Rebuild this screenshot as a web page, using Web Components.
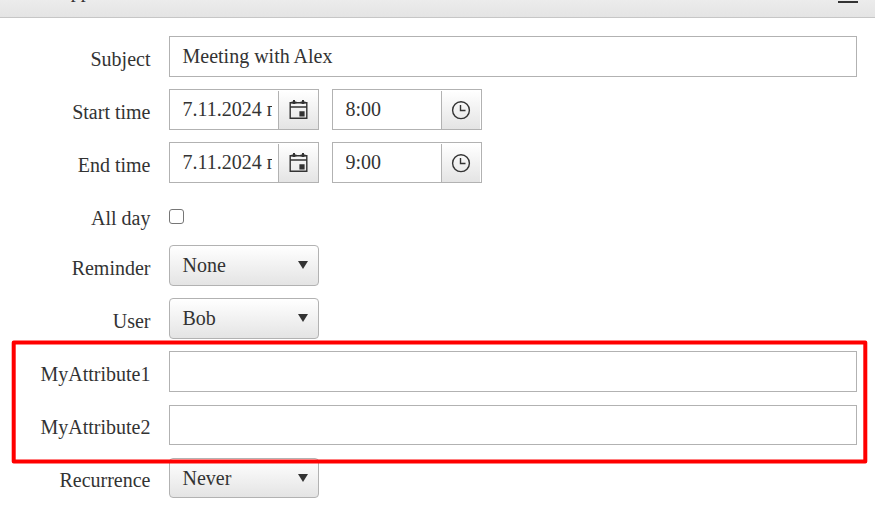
<!DOCTYPE html>
<html lang="en">
<head>
<meta charset="utf-8">
<title>Scheduler</title>
<style>
    html, body { margin: 0; height: 508px; overflow: hidden; background: #fff; }
    body { font: 20px/24px "Liberation Serif", serif; color: #333; position: relative; }
</style>
</head>
<body>
<edit-dialog caption="Edit Appointment">
    <form-row label="Subject"><text-field value="Meeting with Alex"></text-field></form-row>
    <form-row label="Start time">
        <picker-field value="7.11.2024 г." icon="calendar"></picker-field>
        <picker-field value="8:00" icon="clock"></picker-field>
    </form-row>
    <form-row label="End time">
        <picker-field value="7.11.2024 г." icon="calendar"></picker-field>
        <picker-field value="9:00" icon="clock"></picker-field>
    </form-row>
    <form-row label="All day" style="--row: 50px"><check-box></check-box></form-row>
    <form-row label="Reminder"><drop-down>None</drop-down></form-row>
    <form-row label="User"><drop-down>Bob</drop-down></form-row>
    <form-row label="MyAttribute1" style="--row: 54px"><text-field></text-field></form-row>
    <form-row label="MyAttribute2" style="--height: 40px; --label-top: 10px"><text-field></text-field></form-row>
    <form-row label="Recurrence" style="--height: 40px; --label-top: 10px"><drop-down>Never</drop-down></form-row>
</edit-dialog>
<highlight-frame></highlight-frame>

<script>
const border = '#b2b2b2';
const shade = 'linear-gradient(#fff, #e4e4e4)';

const icons = {
    calendar: `
        <svg width="19" height="20" viewBox="0 0 19 20">
            <path d="M1.2 2.7h16.6v15.6H1.2zM1 7h17" fill="none" stroke="#333" stroke-width="1.4"/>
            <path d="M4 0h2v4H4zM13 0h2v4h-2zM2.6 1.4h4.8v2H2.6zM11.6 1.4h4.8v2h-4.8zM10.4 11.2h5.2v5.2h-5.2z" fill="#333"/>
        </svg>`,
    clock: `
        <svg width="20" height="20" viewBox="0 0 20 20">
            <circle cx="10" cy="10.2" r="8.4" fill="none" stroke="#333" stroke-width="1.4"/>
            <path d="M9.5 5v5.5h5" fill="none" stroke="#333" stroke-width="1.4"/>
        </svg>`
};

class EditDialog extends HTMLElement {
    constructor(){
        super();
        this.attachShadow({mode: 'open'});
    }

    connectedCallback(){
        this.shadowRoot.innerHTML = `
        <style>
            :host { display: block; }
            header {
                box-sizing: border-box;
                height: 18px;
                padding: 0 17px 0 19px;
                display: flex;
                justify-content: space-between;
                align-items: flex-end;
                overflow: hidden;
                border-bottom: 1px solid #c6c6c6;
                background: linear-gradient(#ececec, #e4e4e4);
            }
            .caption { height: 24px; margin-bottom: 15px; }
            .bar { width: 20px; height: 2px; margin-bottom: 14px; background: #333; }
            main { padding: 18px 18px 0 0; }
        </style>
        <header>
            <span class="caption">${this.getAttribute('caption')}</span>
            <span class="bar"></span>
        </header>
        <main><slot></slot></main>
        `;
    }
}

class FormRow extends HTMLElement {
    constructor(){
        super();
        this.attachShadow({mode: 'open'});
    }

    connectedCallback(){
        this.shadowRoot.innerHTML = `
        <style>
            :host {
                display: flex;
                height: var(--row, 53px);
                gap: 18.5px;
            }
            label {
                width: 150.5px;
                box-sizing: border-box;
                padding-top: var(--label-top, 11px);
                text-align: right;
                flex: none;
            }
            .field { display: flex; flex: 1; gap: 13px; height: var(--height, 41px); }
        </style>
        <label>${this.getAttribute('label')}</label>
        <div class="field"><slot></slot></div>
        `;
    }
}

class TextField extends HTMLElement {
    constructor(){
        super();
        this.attachShadow({mode: 'open'});
    }

    connectedCallback(){
        this.shadowRoot.innerHTML = `
        <style>
            :host {
                display: block;
                flex: 1;
                box-sizing: border-box;
                padding: 7px 12.5px;
                border: 1px solid ${border};
                background: #fff;
            }
        </style>
        <span>${this.getAttribute('value') || ''}</span>
        `;
    }
}

class PickerField extends HTMLElement {
    constructor(){
        super();
        this.attachShadow({mode: 'open'});
    }

    connectedCallback(){
        const icon = this.getAttribute('icon');
        this.shadowRoot.innerHTML = `
        <style>
            :host {
                display: flex;
                width: 150px;
                box-sizing: border-box;
                border: 1px solid ${border};
                background: #fff;
            }
            .value {
                flex: 1;
                min-width: 0;
                margin: 7px 6px 0 12.5px;
                overflow: hidden;
                white-space: nowrap;
            }
            .button {
                width: 39px;
                margin-top: 1px;
                display: flex;
                justify-content: center;
                align-items: center;
                border-left: 1px solid ${border};
                background: ${shade};
            }
            .clock { width: 38px; margin-right: 1px; }
            svg { display: block; }
        </style>
        <span class="value">${this.getAttribute('value')}</span>
        <span class="button ${icon}">${icons[icon]}</span>
        `;
    }
}

class CheckBox extends HTMLElement {
    constructor(){
        super();
        this.attachShadow({mode: 'open'});
    }

    connectedCallback(){
        this.shadowRoot.innerHTML = `
        <style>
            :host {
                display: block;
                box-sizing: border-box;
                width: 15px;
                height: 15px;
                margin-top: 14px;
                border: 1px solid #767676;
                border-radius: 3px;
                background: #fff;
            }
        </style>
        `;
    }
}

class DropDown extends HTMLElement {
    constructor(){
        super();
        this.attachShadow({mode: 'open'});
    }

    connectedCallback(){
        this.shadowRoot.innerHTML = `
        <style>
            :host {
                display: flex;
                justify-content: space-between;
                box-sizing: border-box;
                width: 150px;
                padding: 7px 10px 0 12.5px;
                border: 1px solid ${border};
                border-radius: 4px;
                background: ${shade};
            }
            svg { margin-top: 8px; }
        </style>
        <span><slot></slot></span>
        <svg width="10" height="8"><path d="M0 0h10L5 8z" fill="#333"/></svg>
        `;
    }
}

// Red outline laid over the custom attribute rows
class HighlightFrame extends HTMLElement {
    constructor(){
        super();
        this.attachShadow({mode: 'open'});
    }

    connectedCallback(){
        this.shadowRoot.innerHTML = `
        <style>
            :host { display: block; position: absolute; left: 0; top: 0; pointer-events: none; }
            svg { display: block; }
        </style>
        <svg width="875" height="508">
            <rect x="13.7" y="342.5" width="851.6" height="119" fill="none" stroke="#f00" stroke-width="4" stroke-linejoin="round"/>
        </svg>
        `;
    }
}

customElements.define('edit-dialog', EditDialog)
customElements.define('form-row', FormRow)
customElements.define('text-field', TextField)
customElements.define('picker-field', PickerField)
customElements.define('check-box', CheckBox)
customElements.define('drop-down', DropDown)
customElements.define('highlight-frame', HighlightFrame)
</script>
</body>
</html>
